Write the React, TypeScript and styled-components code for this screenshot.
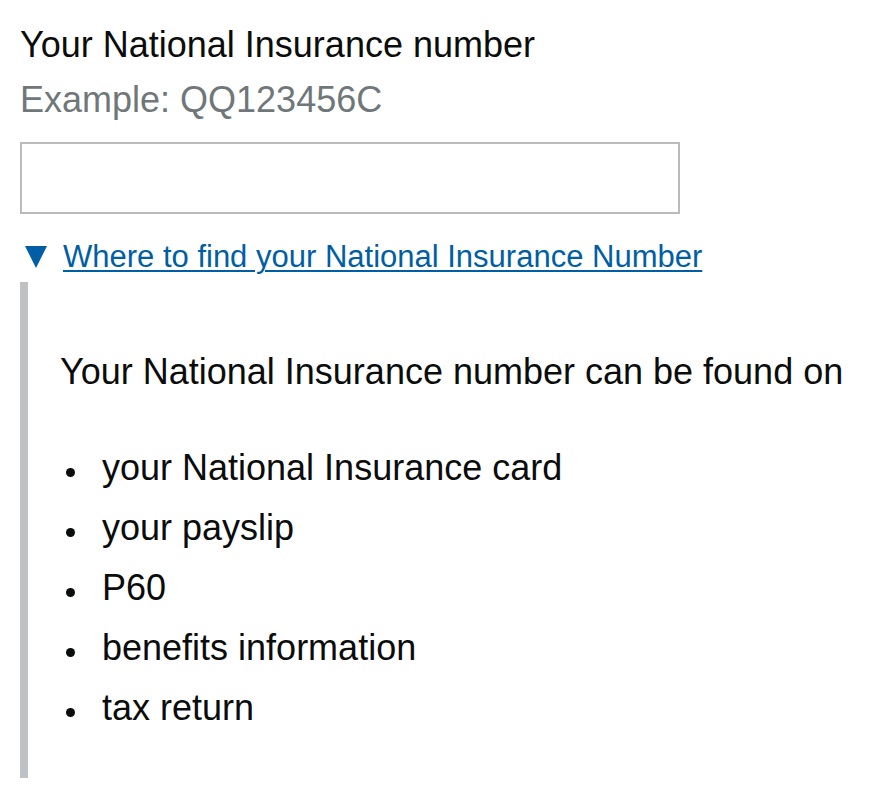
import React from "react";
import styled, { createGlobalStyle } from "styled-components";

const GlobalStyle = createGlobalStyle`
    body {
        margin: 0;
        background: #ffffff;
        font-family: "Liberation Sans", Arial, sans-serif;
        color: #0b0c0c;
    }
`;

const Page = styled.main`
    padding: 20px;
    display: flex;
    flex-direction: column;
`;

const Label = styled.label`
    font-size: 36px;
    line-height: 50px;
    margin-bottom: 5px;
`;

const Hint = styled.div`
    font-size: 36px;
    line-height: 50px;
    color: #6f777b;
    margin-bottom: 17px;
`;

const TextInput = styled.input`
    box-sizing: border-box;
    width: 660px;
    height: 72px;
    border: 2px solid #bbbbbb;
    padding: 0 12px;
    font-family: inherit;
    font-size: 36px;
    outline: none;
`;

const Details = styled.details`
    margin-top: 23px;
`;

const Summary = styled.summary`
    display: flex;
    align-items: center;
    gap: 16px;
    padding-left: 5px;
    font-size: 31px;
    line-height: 40px;
    color: #005ea5;
    cursor: pointer;
    list-style: none;
    margin-bottom: 5px;

    &::-webkit-details-marker {
        display: none;
    }
`;

const SummaryText = styled.span`
    text-decoration: underline;
    text-decoration-thickness: 2px;
    text-underline-offset: 3px;
`;

const Panel = styled.div`
    border-left: 8px solid #bfc1c3;
    padding: 65px 0 35px 32px;
`;

const Paragraph = styled.p`
    margin: 0 0 46px;
    font-size: 36px;
    line-height: 50px;
`;

const List = styled.ul`
    margin: 0;
    padding: 0;
    list-style: none;
`;

const Item = styled.li`
    display: flex;
    align-items: flex-start;
    font-size: 36px;
    line-height: 50px;
    margin-bottom: 10px;

    &::before {
        content: "";
        flex: none;
        width: 9px;
        height: 9px;
        border-radius: 50%;
        background: #0b0c0c;
        margin: 25px 27px 0 6px;
    }
`;

const Caret = () => (
    <svg width="22" height="22" viewBox="0 0 22 22" aria-hidden="true">
        <polygon points="0,0 22,0 11,22" fill="#005ea5" />
    </svg>
);

const places = [
    "your National Insurance card",
    "your payslip",
    "P60",
    "benefits information",
    "tax return",
];

export default function App() {
    return (
        <>
            <GlobalStyle />
            <Page>
                <Label htmlFor="nino">Your National Insurance number</Label>
                <Hint>Example: QQ123456C</Hint>
                <TextInput id="nino" type="text" />
                <Details open>
                    <Summary>
                        <Caret />
                        <SummaryText>Where to find your National Insurance Number</SummaryText>
                    </Summary>
                    <Panel>
                        <Paragraph>Your National Insurance number can be found on</Paragraph>
                        <List>
                            {places.map((p) => (
                                <Item key={p}>{p}</Item>
                            ))}
                        </List>
                    </Panel>
                </Details>
            </Page>
        </>
    );
}
